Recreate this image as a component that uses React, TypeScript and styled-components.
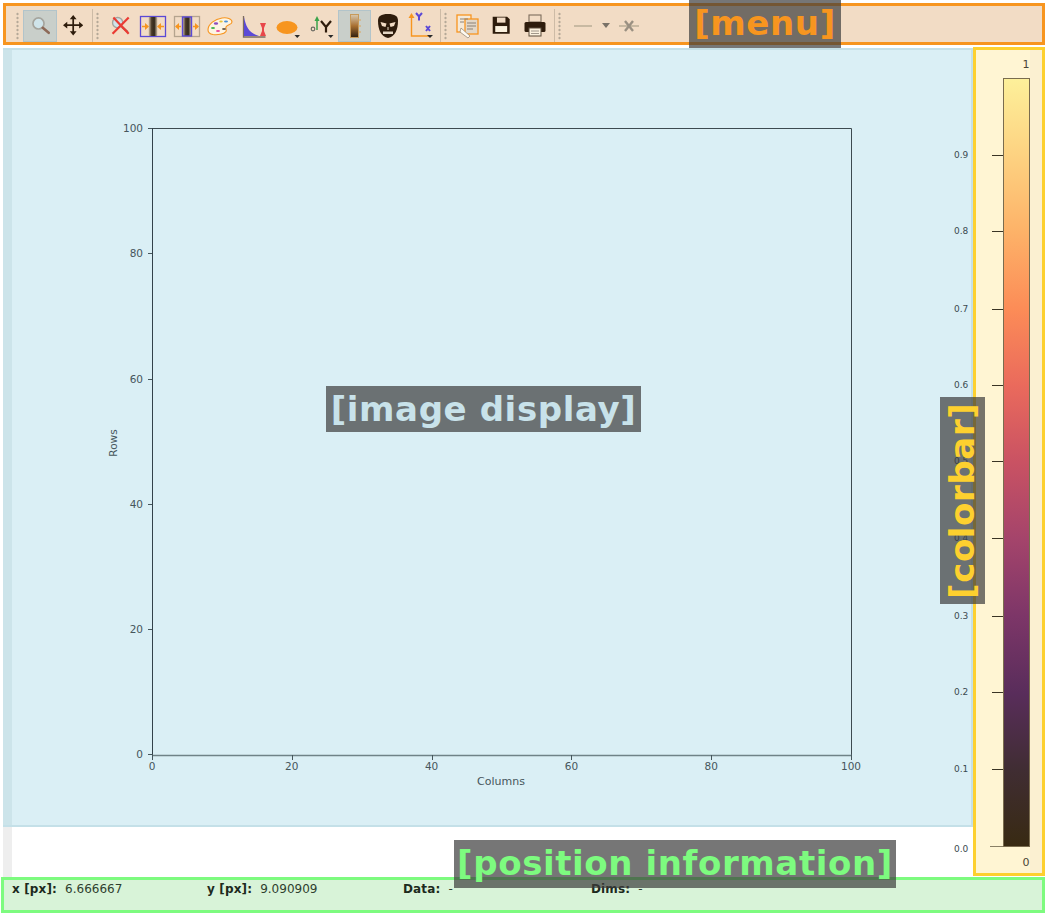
import styled, { createGlobalStyle } from "styled-components";
import type { ReactNode } from "react";

const GlobalStyle = createGlobalStyle`
  html, body {
    margin: 0;
    padding: 0;
    background: #ffffff;
  }
  body {
    font-family: "DejaVu Sans", sans-serif;
  }
`;

const Page = styled.div`
  position: relative;
  width: 1045px;
  height: 914px;
  overflow: hidden;
  display: grid;
  grid-template-rows: 42px 831px 37px;
  padding-top: 3px;
  box-sizing: border-box;
  background: #ffffff;
`;

const MenuBar = styled.div`
  margin-left: 3px;
  box-sizing: border-box;
  border: 3px solid #f7951f;
  background: #f2dcc5;
  display: flex;
  align-items: center;
  padding: 3px 0 0 10px;
`;

const Gripper = styled.div`
  width: 3px;
  height: 28px;
  margin-right: 4px;
  background-image: radial-gradient(#b5a998 45%, transparent 55%);
  background-size: 3px 4px;
`;

const Separator = styled.div`
  width: 1px;
  height: 33px;
  margin: 0 3px 0 2px;
  background: #cdbba6;
`;

const ToolGroup = styled.div<{ $inset?: number }>`
  display: flex;
  align-items: center;
  padding-left: ${(p) => p.$inset ?? 0}px;
`;

const ToolButton = styled.div<{ $active?: boolean; $w?: number }>`
  width: ${(p) => p.$w ?? 33.5}px;
  height: 32px;
  box-sizing: border-box;
  display: flex;
  align-items: center;
  justify-content: center;
  background: ${(p) => (p.$active ? "#c9cfca" : "transparent")};
  border: 1px solid ${(p) => (p.$active ? "#b2c4ca" : "transparent")};
`;

const Middle = styled.div`
  display: grid;
  grid-template-columns: 970px 75px;
  margin-top: 2px;
  height: 829px;
`;

const LeftColumn = styled.div`
  display: grid;
  grid-template-rows: 779px 51px;
  padding: 1px 0 0 3px;
  min-height: 0;
  width: 973px;
  box-sizing: border-box;
`;

const DisplayPanel = styled.div`
  box-sizing: border-box;
  border: 2px solid #c4e0e8;
  border-left-width: 0;
  background: #daeff5;
  display: flex;
`;

const DisplayEdge = styled.div`
  width: 9px;
  background: #cce4ea;
`;

const PlotArea = styled.div`
  flex: 1;
  min-width: 0;
`;

const BelowDisplay = styled.div`
  display: flex;
`;

const BelowEdge = styled.div`
  width: 9px;
  background: #eeeeee;
`;

const ColorbarPanel = styled.div`
  position: relative;
  box-sizing: border-box;
  margin-left: 3px;
  border: 3px solid #fdd02f;
  background: linear-gradient(to right, #fff5d3 0 54px, #fbf0d1 54px);
  height: 829px;
`;

const ColorbarDrawing = styled.svg`
  position: absolute;
  left: -36px;
  top: -3px;
  overflow: visible;
`;

const StatusBar = styled.div`
  margin: 1px 0 0 1px;
  box-sizing: border-box;
  border: 3px solid #7dfb7f;
  background: #d8f3d8;
  display: grid;
  grid-template-columns: 195px 196px 188px 1fr;
  padding: 2px 0 0 8px;
  font-size: 12px;
  color: #2f3f2f;
  height: 36px;
`;

const StatusItem = styled.div`
  display: flex;
  gap: 8px;
  line-height: 15px;
  white-space: nowrap;
`;

const StatusKey = styled.span`
  font-weight: 700;
  letter-spacing: 0.15px;
  color: #1d2a1d;
`;

const Callout = styled.div<{ $color: string }>`
  position: absolute;
  box-sizing: border-box;
  background: rgba(60, 60, 60, 0.7);
  color: ${(p) => p.$color};
  font-weight: 700;
  font-size: 34px;
  letter-spacing: 0.6px;
  line-height: 46px;
  text-align: center;
  white-space: nowrap;
`;

const MenuCallout = styled(Callout)`
  left: 689px;
  top: 0;
  width: 152px;
  height: 48px;
`;

const ImageCallout = styled(Callout)`
  left: 326px;
  top: 386px;
  width: 315px;
  height: 46px;
`;

const PositionCallout = styled(Callout)`
  left: 454px;
  top: 840px;
  width: 442px;
  height: 48px;
`;

const ColorbarCallout = styled(Callout)`
  left: 940px;
  top: 397px;
  width: 45px;
  height: 207px;
  writing-mode: vertical-rl;
  transform: rotate(180deg);
  line-height: 45px;
`;

const Ink = "#2e1c0c";
const Blue = "#5b49d6";
const Orange = "#f7951f";

function Icon({
  children,
  w = 24,
  h = 24,
  scale = 1,
}: {
  children: ReactNode;
  w?: number;
  h?: number;
  scale?: number;
}) {
  return (
    <svg width={w * scale} height={h * scale} viewBox={`0 0 ${w} ${h}`}>
      {children}
    </svg>
  );
}

function ZoomIcon() {
  return (
    <Icon scale={0.85}>
      <circle cx="10" cy="10" r="6.5" fill="#cfe4ea" stroke="#a5a59e" strokeWidth="2" />
      <path d="M15 15l7 6" stroke="#8d6a58" strokeWidth="3" strokeLinecap="round" />
    </Icon>
  );
}

function PanIcon() {
  return (
    <Icon scale={0.85}>
      <path d="M12 3v18M3 12h18" stroke={Ink} strokeWidth="2" />
      <path d="M12 0l4 5H8zM12 24l4-5H8zM0 12l5-4v8zM24 12l-5-4v8z" fill={Ink} />
    </Icon>
  );
}

function ResetZoomIcon() {
  return (
    <Icon scale={0.85}>
      <circle cx="9" cy="9" r="6" fill="#cfe4ea" stroke="#a5a59e" strokeWidth="1.6" />
      <path d="M14 14l7 6" stroke="#8d6a58" strokeWidth="2.4" />
      <path d="M4 3l18 19M22 3L3 22" stroke="#ea3b33" strokeWidth="2.6" />
    </Icon>
  );
}

function FitIcon({ id, frame, inner, outward }: { id: string; frame: string; inner: string; outward?: boolean }) {
  return (
    <Icon w={28} h={24}>
      <defs>
        <linearGradient id={id} x1="0" x2="1">
          <stop offset="0" stopColor="#d9c6ac" />
          <stop offset="0.35" stopColor="#4a3a28" />
          <stop offset="0.65" stopColor="#33291c" />
          <stop offset="1" stopColor="#d9c6ac" />
        </linearGradient>
      </defs>
      <rect x="1.500" y="2.500" width="25" height="20" fill="none" stroke={frame} strokeWidth="1.300" />
      <rect x="9.500" y="3" width="9" height="19" fill={`url(#${id})`} stroke={inner} strokeWidth={outward ? 1.4 : 0} />
      <path d="M3 12.500h5M25 12.500h-5" stroke={Orange} strokeWidth="1.600" />
      {outward ? (
        <path d="M2 12.500l4-3.500v7zM26 12.500l-4-3.500v7z" fill={Orange} />
      ) : (
        <path d="M10 12.500l-4-3.500v7zM18 12.500l4-3.500v7z" fill={Orange} />
      )}
    </Icon>
  );
}

function PaletteIcon() {
  return (
    <Icon w={26}>
      <path
        d="M1 16C1 10 8 5 15 4c5-.7 10 .5 10 4 0 3-5 2.500-6 5-.7 2 1 3 0 4.500C17 20.500 10 21 6 20.500 3 20 1 19 1 16z"
        fill="#fdf4e3"
        stroke={Orange}
        strokeWidth="1.100"
      />
      <ellipse cx="9" cy="9.500" rx="2.200" ry="1.200" fill="#8a4ec0" />
      <ellipse cx="14" cy="7.500" rx="1.800" ry="1" fill="#e8c53a" />
      <ellipse cx="19" cy="7.500" rx="2" ry="1.100" fill="#4a90d9" />
      <ellipse cx="6" cy="14" rx="2" ry="1.100" fill="#3fb54e" />
      <ellipse cx="11" cy="17" rx="2" ry="1.100" fill="#e8479a" />
      <ellipse cx="17" cy="15" rx="2" ry="1.100" fill="#6b5b4b" />
    </Icon>
  );
}

function HistogramIcon() {
  return (
    <Icon w={26} h={26}>
      <path d="M2.500 3v21h22" fill="none" stroke="#7a6b60" strokeWidth="1.300" />
      <path d="M3 4C5 14 8 20 18 23H3z" fill={Blue} />
      <path d="M19 10h6l-2 5v3l2 5h-6l2-5v-3z" fill="#e8474a" />
    </Icon>
  );
}

function ShapeIcon() {
  return (
    <Icon w={26} h={26}>
      <ellipse cx="13" cy="14.500" rx="10.500" ry="6.500" fill={Orange} />
      <path d="M20.500 22h5.500l-2.750 3z" fill="#2a2a2a" />
    </Icon>
  );
}

function FlipIcon() {
  return (
    <Icon w={26} h={26}>
      <circle cx="5" cy="16" r="1.800" fill="none" stroke="#6b6b63" strokeWidth="1.200" />
      <path d="M9 17V7" stroke="#3aa34a" strokeWidth="1.500" />
      <path d="M9 3l2.500 5h-5z" fill="#3aa34a" />
      <path d="M13 8l5 6 5-6M18 14v5.500" fill="none" stroke={Ink} strokeWidth="2.200" />
      <path d="M20 22h5.500l-2.750 3z" fill="#2a2a2a" />
    </Icon>
  );
}

function ColorbarIcon() {
  return (
    <Icon w={16} h={28}>
      <defs>
        <linearGradient id="bar-icon" x1="0" x2="0" y1="0" y2="1">
          <stop offset="0" stopColor="#d8c9b0" />
          <stop offset="0.5" stopColor="#a86f30" />
          <stop offset="1" stopColor="#2f1f10" />
        </linearGradient>
      </defs>
      <rect x="4.500" y="2.500" width="8" height="23" fill="url(#bar-icon)" stroke="#c79a5a" strokeWidth="1" />
      <path d="M12.500 8h2.500M12.500 14h2.500M12.500 20h2.500" stroke="#d9a662" strokeWidth="1" />
    </Icon>
  );
}

function MaskIcon() {
  return (
    <Icon w={24} h={26}>
      <path d="M12 1C5 1 2 3 2 8c0 8 3 16 10 17 7-1 10-9 10-17 0-5-3-7-10-7z" fill={Ink} />
      <path d="M4.500 9l6 1.500-1 3.500-3.500-1zM19.500 9l-6 1.500 1 3.500 3.500-1z" fill="#f2dcc5" />
      <path d="M11 14h2v3h-2z" fill="#8a7a68" />
      <path d="M7 18.500h10v2.500H7z" fill="#e4d6c4" />
    </Icon>
  );
}

function AxesIcon() {
  return (
    <Icon w={28} h={28}>
      <path d="M4.500 6v18h19" fill="none" stroke={Orange} strokeWidth="1.400" />
      <path d="M4.500 1l3 5h-6z" fill={Orange} />
      <path d="M9 1l3 3.500L15 1M12 4.500v4" fill="none" stroke={Blue} strokeWidth="2" />
      <path d="M19 14l4 5M23 14l-4 5" stroke={Blue} strokeWidth="2" />
      <path d="M20 23h6l-3 3z" fill="#2a2a2a" />
    </Icon>
  );
}

function CopyIcon() {
  return (
    <Icon w={24} h={26}>
      <rect x="1" y="2" width="14" height="17" fill="#f5e9d8" stroke={Orange} strokeWidth="1.300" />
      <rect x="9" y="6" width="13" height="15" fill="#e2d7c8" stroke={Orange} strokeWidth="1.300" />
      <path d="M4 6h8M4 9h4M11 10h9M11 13h9M11 16h6" stroke="#8b8176" strokeWidth="1" />
      <path d="M5 15l9 8-2 2-8-6z" fill="#fdf9f0" stroke="#9b8d7a" strokeWidth="0.800" />
    </Icon>
  );
}

function SaveIcon() {
  return (
    <Icon scale={0.85}>
      <path d="M2 2h17l3 3v17H2z" fill={Ink} />
      <rect x="7" y="3" width="10" height="6" fill="#f2dcc5" />
      <rect x="5" y="13" width="14" height="7" fill="#fbf1de" />
    </Icon>
  );
}

function PrintIcon() {
  return (
    <Icon w={24} h={26}>
      <rect x="6" y="2" width="12" height="7" fill="#f2dcc5" stroke="#7d6d5c" strokeWidth="1.100" />
      <rect x="1.500" y="9" width="21" height="10" rx="1.500" fill={Ink} />
      <rect x="6" y="15" width="12" height="8" fill="#fbf1de" stroke="#5a4a3a" strokeWidth="1" />
      <path d="M8 18h8M8 20.500h8" stroke="#8b8176" strokeWidth="0.800" />
    </Icon>
  );
}

function LineIcon() {
  return (
    <Icon w={22} h={10}>
      <path d="M2 5h18" stroke="#bdb09a" strokeWidth="1.600" />
    </Icon>
  );
}

function SmallArrow() {
  return (
    <Icon w={10} h={8}>
      <path d="M1 1h8L5 6z" fill="#7a7268" />
    </Icon>
  );
}

function MarkerIcon() {
  return (
    <Icon w={22} h={14}>
      <path d="M1 7h20" stroke="#bdb09a" strokeWidth="1.600" />
      <path d="M7 2l8 10M15 2L7 12" stroke="#9a9082" strokeWidth="2.400" />
    </Icon>
  );
}

const TICKS = [0, 20, 40, 60, 80, 100];

// matplotlib style axes, coordinates are relative to the plot panel
function Plot() {
  const x0 = 140;
  const x1 = 839;
  const y0 = 705;
  const y1 = 78;
  const sx = (v: number) => x0 + ((x1 - x0) * v) / 100;
  const sy = (v: number) => y0 - 0.7 - ((y0 - 0.7 - y1) * v) / 100;
  const ink = "#46565c";
  return (
    <svg width="958" height="775" viewBox="0 0 958 775" fontFamily="DejaVu Sans" fontSize="10.500" fill={ink}>
      <path d={`M${x0} ${y1 + 0.5}H${x1 + 0.5}V${y0}`} fill="none" stroke="#3c4a50" strokeWidth="1" />
      <path d={`M${x0 + 0.5} ${y1}V${y0}`} stroke="#33424a" strokeWidth="1" />
      <path d={`M${x0} ${y0 + 0.5}H${x1 + 1}`} stroke="#6f8287" strokeWidth="1.500" />
      {TICKS.map((t) => (
        <g key={t}>
          <path d={`M${Math.round(sx(t)) + 0.5} ${y0}v5`} stroke={ink} strokeWidth="1" />
          <text x={sx(t)} y={y0 + 15} textAnchor="middle">
            {t}
          </text>
          <path d={`M${x0 - 4} ${Math.round(sy(t)) + 0.5}h4`} stroke={ink} strokeWidth="1" />
          <text x={x0 - 9} y={sy(t) + 4} textAnchor="end">
            {t}
          </text>
        </g>
      ))}
      <text x={489} y={735} textAnchor="middle" fontSize="11">
        Columns
      </text>
      <text transform="translate(105 393) rotate(-90)" textAnchor="middle">
        Rows
      </text>
    </svg>
  );
}

const COLOR_LABELS = ["0.9", "0.8", "0.7", "0.6", "0.5", "0.4", "0.3", "0.2", "0.1"];
const COLOR_TICK_Y = [155, 231, 309, 385, 461, 538, 616, 692, 769];

function ColorbarChart() {
  // svg origin sits at x=940, y=47 on the page
  const px = (x: number) => x - 940;
  const py = (y: number) => y - 47;
  return (
    <ColorbarDrawing width="105" height="829" fontFamily="DejaVu Sans" fontSize="9" fill="#3a4a50">
      <defs>
        <linearGradient id="magma" x1="0" x2="0" y1="0" y2="1">
          <stop offset="0" stopColor="#fdf09a" />
          <stop offset="0.1" stopColor="#fdd281" />
          <stop offset="0.2" stopColor="#fdb268" />
          <stop offset="0.3" stopColor="#fc8c57" />
          <stop offset="0.4" stopColor="#ea6a5c" />
          <stop offset="0.5" stopColor="#c95263" />
          <stop offset="0.6" stopColor="#a4446b" />
          <stop offset="0.7" stopColor="#7d3668" />
          <stop offset="0.8" stopColor="#592d5b" />
          <stop offset="0.9" stopColor="#402d33" />
          <stop offset="1" stopColor="#382a12" />
        </linearGradient>
      </defs>
      <rect
        x={px(1003.5)}
        y={py(78.5)}
        width="26"
        height="768"
        fill="url(#magma)"
        stroke="#7a6c4e"
        strokeWidth="1"
      />
      {COLOR_TICK_Y.map((y, i) => (
        <g key={y}>
          <path d={`M${px(992)} ${py(y) + 0.5}h11`} stroke="#3a3424" strokeWidth="1" />
          <text x={px(954)} y={py(y) + 3}>
            {COLOR_LABELS[i]}
          </text>
        </g>
      ))}
      <path d={`M${px(990)} ${py(846) + 0.5}h13`} stroke="#8a8066" strokeWidth="1" />
      <text x={px(954)} y={py(852)}>
        0.0
      </text>
      <text x={px(1022.5)} y={py(68)} fontSize="11" fill="#4a4536">
        1
      </text>
      <text x={px(1022.5)} y={py(866)} fontSize="11" fill="#4a4536">
        0
      </text>
    </ColorbarDrawing>
  );
}

export default function App() {
  return (
    <>
      <GlobalStyle />
      <Page>
        <MenuBar>
          <Gripper />
          <ToolGroup>
            <ToolButton $active>
              <ZoomIcon />
            </ToolButton>
            <ToolButton>
              <PanIcon />
            </ToolButton>
          </ToolGroup>
          <Separator />
          <Gripper />
          <ToolGroup>
            <ToolButton>
              <ResetZoomIcon />
            </ToolButton>
            <ToolButton>
              <FitIcon id="fit-full" frame="#5b49d6" inner="#8a7a68" />
            </ToolButton>
            <ToolButton>
              <FitIcon id="fit-data" frame="#b5a48f" inner="#5b49d6" outward />
            </ToolButton>
            <ToolButton>
              <PaletteIcon />
            </ToolButton>
            <ToolButton>
              <HistogramIcon />
            </ToolButton>
            <ToolButton>
              <ShapeIcon />
            </ToolButton>
            <ToolButton>
              <FlipIcon />
            </ToolButton>
            <ToolButton $active>
              <ColorbarIcon />
            </ToolButton>
            <ToolButton>
              <MaskIcon />
            </ToolButton>
            <ToolButton>
              <AxesIcon />
            </ToolButton>
          </ToolGroup>
          <Separator />
          <Gripper />
          <ToolGroup>
            <ToolButton>
              <CopyIcon />
            </ToolButton>
            <ToolButton>
              <SaveIcon />
            </ToolButton>
            <ToolButton>
              <PrintIcon />
            </ToolButton>
          </ToolGroup>
          <Separator />
          <Gripper />
          <ToolGroup $inset={3}>
            <ToolButton $w={30}>
              <LineIcon />
            </ToolButton>
            <ToolButton $w={16}>
              <SmallArrow />
            </ToolButton>
            <ToolButton $w={30}>
              <MarkerIcon />
            </ToolButton>
          </ToolGroup>
        </MenuBar>

        <Middle>
          <LeftColumn>
            <DisplayPanel>
              <DisplayEdge />
              <PlotArea>
                <Plot />
              </PlotArea>
            </DisplayPanel>
            <BelowDisplay>
              <BelowEdge />
            </BelowDisplay>
          </LeftColumn>
          <ColorbarPanel>
            <ColorbarChart />
          </ColorbarPanel>
        </Middle>

        <StatusBar>
          <StatusItem>
            <StatusKey>x [px]:</StatusKey>
            <span>6.666667</span>
          </StatusItem>
          <StatusItem>
            <StatusKey>y [px]:</StatusKey>
            <span>9.090909</span>
          </StatusItem>
          <StatusItem>
            <StatusKey>Data:</StatusKey>
            <span>-</span>
          </StatusItem>
          <StatusItem>
            <StatusKey>Dims:</StatusKey>
            <span>-</span>
          </StatusItem>
        </StatusBar>

        <MenuCallout $color="#f7951f">[menu]</MenuCallout>
        <ImageCallout $color="#c8e2ea">[image display]</ImageCallout>
        <PositionCallout $color="#7dfb7f">[position information]</PositionCallout>
        <ColorbarCallout $color="#fdd02f">[colorbar]</ColorbarCallout>
      </Page>
    </>
  );
}
